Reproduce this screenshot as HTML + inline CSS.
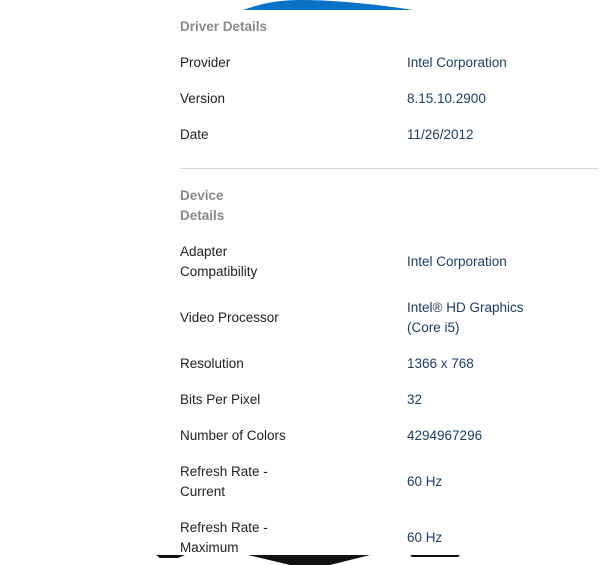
<!DOCTYPE html>
<html><head><style>
body{margin:0;width:602px;height:565px;background:#fff;position:relative;overflow:hidden;font-family:"Liberation Sans",sans-serif;font-size:13.5px;}
.t{position:absolute;line-height:20px;white-space:nowrap;}
.h{color:#8a8a8a;font-weight:bold;left:180px;}
.l{color:#222;left:180px;}
.v{color:#1d3f66;left:407px;}
</style></head><body>
<svg style="position:absolute;left:0;top:0" width="602" height="565">
<path d="M243 10 C262 3 280 0 300 0 C340 0 380 5 413 10 Z" fill="#0a72c6"/>
<path d="M156 555 L185 555 L178 558 L160 558 Z" fill="#111"/>
<path d="M248 555 L370 555 L330 565 L290 565 Z" fill="#111"/>
<path d="M410 555 L460 555 L458 557 L412 557 Z" fill="#111"/>
<rect x="180" y="168" width="418" height="1" fill="#d8d8d8"/>
</svg>
<div class="t h" style="top:17px">Driver Details</div>
<div class="t l" style="top:53px">Provider</div><div class="t v" style="top:53px">Intel Corporation</div>
<div class="t l" style="top:89px">Version</div><div class="t v" style="top:89px">8.15.10.2900</div>
<div class="t l" style="top:125px">Date</div><div class="t v" style="top:125px">11/26/2012</div>
<div class="t h" style="top:186px">Device<br>Details</div>
<div class="t l" style="top:242px">Adapter<br>Compatibility</div><div class="t v" style="top:252px">Intel Corporation</div>
<div class="t l" style="top:308px">Video Processor</div><div class="t v" style="top:298px">Intel® HD Graphics<br>(Core i5)</div>
<div class="t l" style="top:354px">Resolution</div><div class="t v" style="top:354px">1366 x 768</div>
<div class="t l" style="top:390px">Bits Per Pixel</div><div class="t v" style="top:390px">32</div>
<div class="t l" style="top:426px">Number of Colors</div><div class="t v" style="top:426px">4294967296</div>
<div class="t l" style="top:462px">Refresh Rate -<br>Current</div><div class="t v" style="top:472px">60 Hz</div>
<div class="t l" style="top:518px">Refresh Rate -<br>Maximum</div><div class="t v" style="top:528px">60 Hz</div>
</body></html>
